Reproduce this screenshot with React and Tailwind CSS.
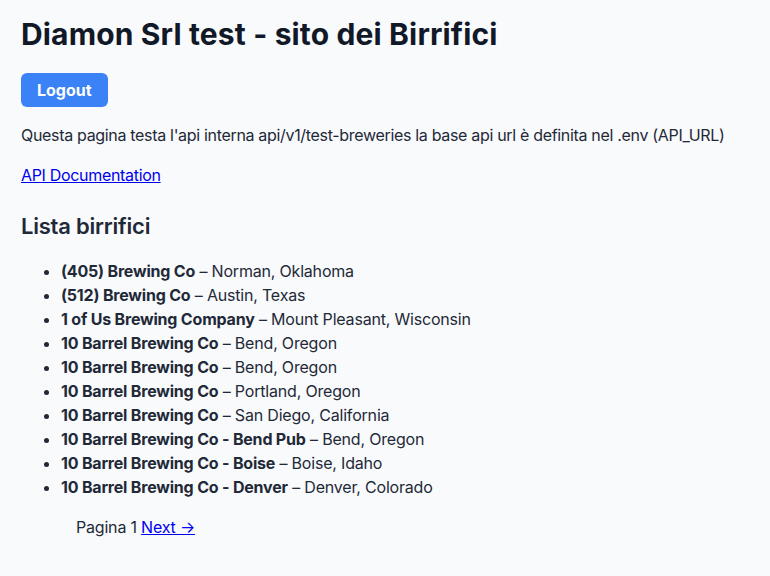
const breweries = [
  { name: '(405) Brewing Co', city: 'Norman', state: 'Oklahoma' },
  { name: '(512) Brewing Co', city: 'Austin', state: 'Texas' },
  { name: '1 of Us Brewing Company', city: 'Mount Pleasant', state: 'Wisconsin' },
  { name: '10 Barrel Brewing Co', city: 'Bend', state: 'Oregon' },
  { name: '10 Barrel Brewing Co', city: 'Bend', state: 'Oregon' },
  { name: '10 Barrel Brewing Co', city: 'Portland', state: 'Oregon' },
  { name: '10 Barrel Brewing Co', city: 'San Diego', state: 'California' },
  { name: '10 Barrel Brewing Co - Bend Pub', city: 'Bend', state: 'Oregon' },
  { name: '10 Barrel Brewing Co - Boise', city: 'Boise', state: 'Idaho' },
  { name: '10 Barrel Brewing Co - Denver', city: 'Denver', state: 'Colorado' },
]

export default function App() {
  return (
    <div className="min-h-[576px] bg-[#f8fafc] text-[#1f2937] font-['Inter',sans-serif] px-[21px] pt-4 pb-8">
      <h1 className="text-3xl font-bold text-[#111827] tracking-[0.005em]">Diamon Srl test - sito dei Birrifici</h1>

      <button className="mt-[21px] px-4 py-[5px] leading-6 rounded-md bg-[#3b82f6] text-white font-bold">
        Logout
      </button>

      <p className="mt-4 leading-6 tracking-[-0.02em] whitespace-nowrap">
        Questa pagina testa l'api interna api/v1/test-breweries la base api url è definita nel .env (API_URL)
      </p>

      <p className="mt-4 leading-6 tracking-[-0.02em]">
        <a href="#" className="text-[#0000ee] underline">API Documentation</a>
      </p>

      <h2 className="mt-[25px] text-[22px] leading-7 font-semibold tracking-[-0.01em]">Lista birrifici</h2>

      <ul className="mt-[19px] list-disc pl-10 tracking-[-0.012em]">
        {breweries.map((b, i) => (
          <li key={i} className="leading-6">
            <strong className="font-bold">{b.name}</strong> – {b.city}, {b.state}
          </li>
        ))}
      </ul>

      <div className="mt-4 ml-[55px] leading-6 tracking-[-0.012em]">
        Pagina 1 <a href="#" className="text-[#0000ee] underline">Next →</a>
      </div>
    </div>
  )
}
